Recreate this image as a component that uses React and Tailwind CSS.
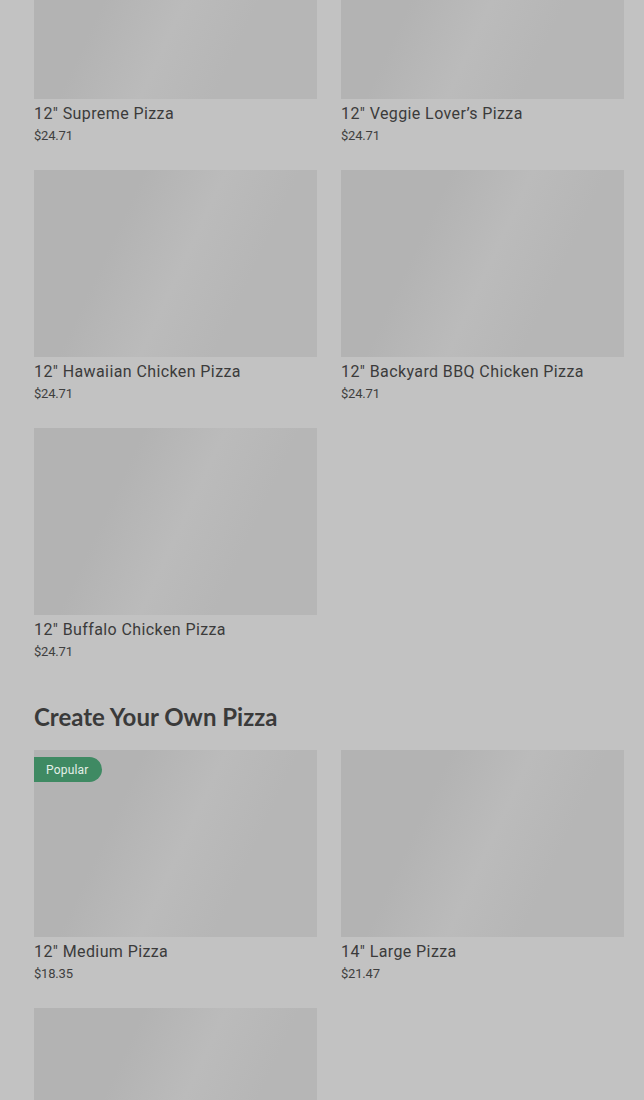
import React from "react"

const sections = [
  {
    title: null,
    items: [
      { name: '12" Supreme Pizza', price: "$24.71" },
      { name: '12" Veggie Lover\u2019s Pizza', price: "$24.71" },
      { name: '12" Hawaiian Chicken Pizza', price: "$24.71" },
      { name: '12" Backyard BBQ Chicken Pizza', price: "$24.71" },
      { name: '12" Buffalo Chicken Pizza', price: "$24.71" },
    ],
  },
  {
    title: "Create Your Own Pizza",
    items: [
      { name: '12" Medium Pizza', price: "$18.35", popular: true },
      { name: '14" Large Pizza', price: "$21.47" },
      { name: '16" Pizza', price: "$24.59" },
    ],
  },
]

const MenuCard = ({ item }) => (
  <div className="flex flex-col">
    <div className="relative h-[187px] bg-[linear-gradient(115deg,#b3b3b3_30%,#bbbbbb_52%,#b6b6b6_72%)]">
      {item.popular && (
        <span className="absolute left-0 top-[7px] h-[25px] pl-[12px] pr-[13px] flex items-center rounded-r-full bg-[#3f8a63] text-[12px] tracking-[0.2px] text-[#e4efe8] font-['Roboto',sans-serif]">
          Popular
        </span>
      )}
    </div>
    <div className="mt-[4px] text-[16px] leading-[22px] tracking-[0.4px] text-[#3b3b3b] font-['Roboto',sans-serif]">
      {item.name}
    </div>
    <div className="mt-[2px] text-[13px] leading-[18px] text-[#3f3f3f] tracking-[-0.2px] font-['Roboto',sans-serif]">
      {item.price}
    </div>
  </div>
)

export default function App() {
  return (
    <div className="h-[1100px] overflow-hidden bg-[#c2c2c2]">
      <div className="-mt-[88px] pl-[34px] pr-[20px]">
        {sections.map((section, i) => (
          <section key={i} className={i > 0 ? "mt-[41px]" : ""}>
            {section.title && (
              <h2 className="mb-[18px] text-[24px] leading-[30px] font-bold text-[#3a3a3a] font-['Lato',sans-serif]">
                {section.title}
              </h2>
            )}
            <div className="grid grid-cols-2 gap-x-[24px] gap-y-[25px]">
              {section.items.map((item) => (
                <MenuCard key={item.name} item={item} />
              ))}
            </div>
          </section>
        ))}
      </div>
    </div>
  )
}
